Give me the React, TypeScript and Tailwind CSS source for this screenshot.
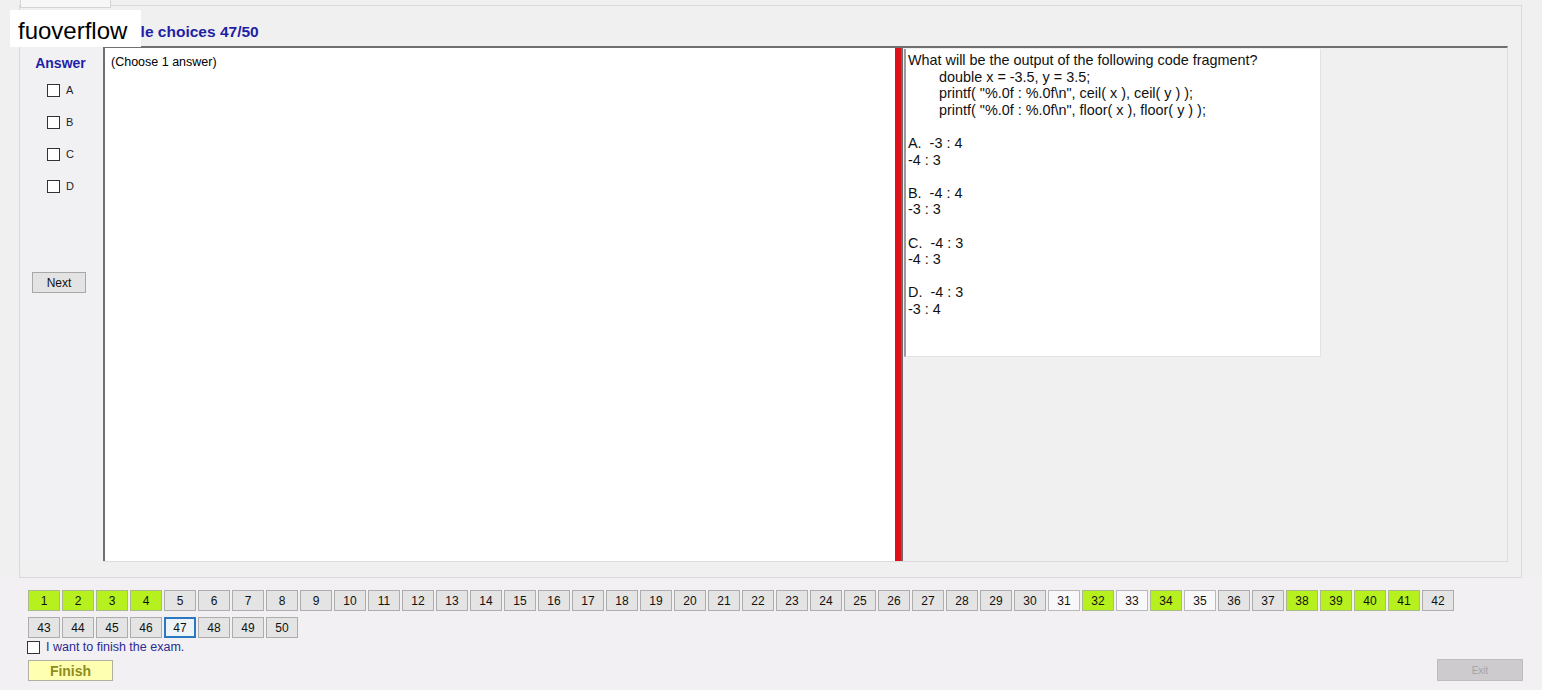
import React from "react";

const green = new Set([1, 2, 3, 4, 32, 34, 38, 39, 40, 41]);
const whiteish = new Set([31, 33, 35]);

function NumBtn({ n }: { n: number }) {
  let cls =
    "w-[32px] h-[21px] flex items-center justify-center text-[12px] text-[#111] border ";
  if (n === 47) cls += "border-2 border-[#2a78c2] bg-[#eef3f8]";
  else if (green.has(n)) cls += "border-[#a9b98c] bg-[#b6f01e]";
  else if (whiteish.has(n)) cls += "border-[#b9b9b9] bg-[#f8f8fa]";
  else cls += "border-[#adadad] bg-[#e4e4e4]";
  return <div className={cls}>{n}</div>;
}

function Box() {
  return <div className="w-[13px] h-[13px] border border-[#333] bg-white" />;
}

export default function App() {
  const row1 = Array.from({ length: 42 }, (_, i) => i + 1);
  const row2 = Array.from({ length: 8 }, (_, i) => i + 43);
  const lines: { t: string; indent?: boolean }[] = [
    { t: "What will be the output of the following code fragment?" },
    { t: "double x = -3.5, y = 3.5;", indent: true },
    { t: 'printf( "%.0f : %.0f\\n", ceil( x ), ceil( y ) );', indent: true },
    { t: 'printf( "%.0f : %.0f\\n", floor( x ), floor( y ) );', indent: true },
    { t: "" },
    { t: "A.  -3 : 4" },
    { t: "-4 : 3" },
    { t: "" },
    { t: "B.  -4 : 4" },
    { t: "-3 : 3" },
    { t: "" },
    { t: "C.  -4 : 3" },
    { t: "-4 : 3" },
    { t: "" },
    { t: "D.  -4 : 3" },
    { t: "-3 : 4" },
  ];
  return (
    <div className="relative w-[1542px] h-[690px] overflow-hidden bg-[#f0f0f0] font-['Liberation_Sans',Arial,sans-serif] text-black">
      {/* tab strip */}
      <div className="h-[5px] relative">
        <div className="ml-[20px] w-[91px] h-[8px] border-x border-b border-[#d4d4d4] bg-[#f7f7f7] relative z-10" />
      </div>
      {/* outer frame */}
      <div className="ml-[19px] w-[1503px] h-[573px] border border-[#dadada] bg-[#f0f0f0]">
        <div className="h-[40px] pl-[75px] pt-[14px]">
          <span className="text-[15.5px] leading-[17px] font-bold text-[#1f1fa6]">Multiple choices 47/50</span>
        </div>
        <div className="flex h-[516px]">
          {/* answer column */}
          <div className="w-[83px] bg-[#f1f1f4] flex flex-col">
            <div className="pt-[9px] text-center text-[14px] leading-[16px] font-bold text-[#1f1fa6] pr-[2px]">Answer</div>
            <div className="mt-[13px] ml-[27px] flex flex-col gap-[19px]">
              {["A", "B", "C", "D"].map((l) => (
                <div key={l} className="flex items-center h-[13px] gap-[6px]">
                  <Box />
                  <span className="text-[11px] text-[#222]">{l}</span>
                </div>
              ))}
            </div>
            <div className="mt-[79px] ml-[12px] w-[54px] h-[21px] border border-[#a8a8a8] bg-[#e3e3e3] flex items-center justify-center text-[12px] text-[#111]">
              Next
            </div>
          </div>
          {/* content */}
          <div className="w-[1405px] h-[516px] border-t-2 border-t-[#6f6f6f] border-r border-b border-r-[#dcdcdc] border-b-[#dcdcdc] flex">
            <div className="w-[792px] h-full bg-white border-l-2 border-[#6f6f6f] pt-[7px] pl-[6px] text-[12.5px] leading-[14px]">
              (Choose 1 answer)
            </div>
            <div className="w-[8px] h-full bg-[#e0101a] border-r-2 border-[#6a6a6a]" />
            <div className="flex-1 pl-[1px] pt-[1px]">
              <div className="w-[417px] h-[308px] bg-white border-l-2 border-[#9a9a9a] border-r border-b border-r-[#e2e2e2] border-b-[#e2e2e2] pt-[3px] pl-[2px] text-[14.4px] leading-[16.6px] text-[#111]">
                {lines.map((l, i) => (
                  <div key={i} className={"h-[16.6px] whitespace-pre " + (l.indent ? "pl-[31px]" : "")}>
                    {l.t}
                  </div>
                ))}
              </div>
            </div>
          </div>
        </div>
      </div>
      {/* bottom area */}
      <div className="bg-[#f2f0f3] h-[112px] pt-[12px]">
        <div className="pl-[28px] flex flex-col gap-[6px]">
          <div className="flex gap-[2px]">
            {row1.map((n) => (
              <NumBtn key={n} n={n} />
            ))}
          </div>
          <div className="flex gap-[2px]">
            {row2.map((n) => (
              <NumBtn key={n} n={n} />
            ))}
          </div>
        </div>
        <div className="ml-[27px] mt-[2px] flex items-center h-[14px] gap-[6px]">
          <Box />
          <span className="text-[12.5px] text-[#2a2a92]">I want to finish the exam.</span>
        </div>
        <div className="mt-[5px] flex justify-between items-start pl-[28px] pr-[19px]">
          <div className="mt-[1px] w-[85px] h-[21px] border border-[#b0b0a0] bg-[#ffffb2] flex items-center justify-center pt-[2px] text-[14px] font-bold text-[#8d8d1c]">
            Finish
          </div>
          <div className="w-[86px] h-[22px] border border-[#bdbdbd] bg-[#cdcbce] flex items-center justify-center text-[10px] text-[#a4a4a8]">
            Exit
          </div>
        </div>
      </div>
      {/* watermark */}
      <div className="absolute left-[10px] top-[10px] w-[131px] h-[37px] bg-white flex items-center pl-[8px] pt-[5px] text-[24px] text-black">
        fuoverflow
      </div>
    </div>
  );
}
